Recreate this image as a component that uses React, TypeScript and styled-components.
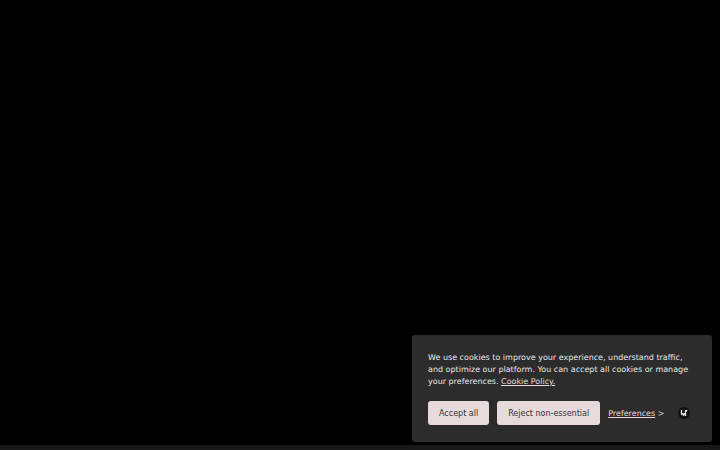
import { ReactElement } from 'react';
import styled, { createGlobalStyle } from 'styled-components';

const GlobalStyle = createGlobalStyle`
    html, body {
        margin: 0;
        height: 100%;
        background: #000;
        overflow: hidden;
    }
`;

const App = (): ReactElement => (
    <>
        <GlobalStyle />
        <Page>
            <Main />
            <Footer />
            <Banner>
                <Message>
                    We use cookies to improve your experience, understand traffic, and optimize our platform. You can
                    accept all cookies or manage your preferences. <PolicyLink href="#">Cookie Policy.</PolicyLink>
                </Message>
                <Actions>
                    <ActionBtn>Accept all</ActionBtn>
                    <ActionBtn>Reject non-essential</ActionBtn>
                    <PrefLink href="#">
                        <u>Preferences</u> &gt;
                    </PrefLink>
                    <Badge>
                        <svg width="8" height="8" viewBox="0 0 8 8" fill="none" stroke="#e8e8e8" strokeWidth="1.3">
                            <path d="M1.5 1v4h3M5.5 1v6M7 1L3 7" />
                        </svg>
                    </Badge>
                </Actions>
            </Banner>
        </Page>
    </>
);

const Page = styled.div`
    display: flex;
    flex-direction: column;
    height: 100vh;
    font-family: 'DejaVu Sans', sans-serif;
    text-rendering: geometricPrecision;
`;

const Main = styled.main`
    flex: 1;
    background: #000;
`;

const Footer = styled.footer`
    height: 5px;
    background: #181818;
`;

const Banner = styled.section`
    position: fixed;
    right: 8px;
    bottom: 8px;
    box-sizing: border-box;
    width: 300px;
    height: 107px;
    padding: 17px 16px 16px;
    background: #2c2c2c;
    border-radius: 3px;
`;

const Message = styled.p`
    margin: 0;
    color: #ebe6e6;
    font-size: 8px;
    line-height: 12px;
`;

const PolicyLink = styled.a`
    color: #e6d9d9;
    text-decoration: underline;
`;

const Actions = styled.div`
    display: flex;
    align-items: center;
    gap: 8px;
    margin-top: 13px;
`;

const ActionBtn = styled.button`
    height: 24px;
    padding: 0 11px;
    border: none;
    border-radius: 3px;
    background: #e6dada;
    color: #333;
    font-family: inherit;
    font-size: 8px;
    white-space: nowrap;
`;

const PrefLink = styled.a`
    color: #e6d9d9;
    font-size: 8px;
    text-decoration: none;
    white-space: nowrap;
`;

const Badge = styled.span`
    display: flex;
    align-items: center;
    justify-content: center;
    width: 12px;
    height: 12px;
    margin-left: 6px;
    border-radius: 50%;
    background: #111;
`;

export default App;
